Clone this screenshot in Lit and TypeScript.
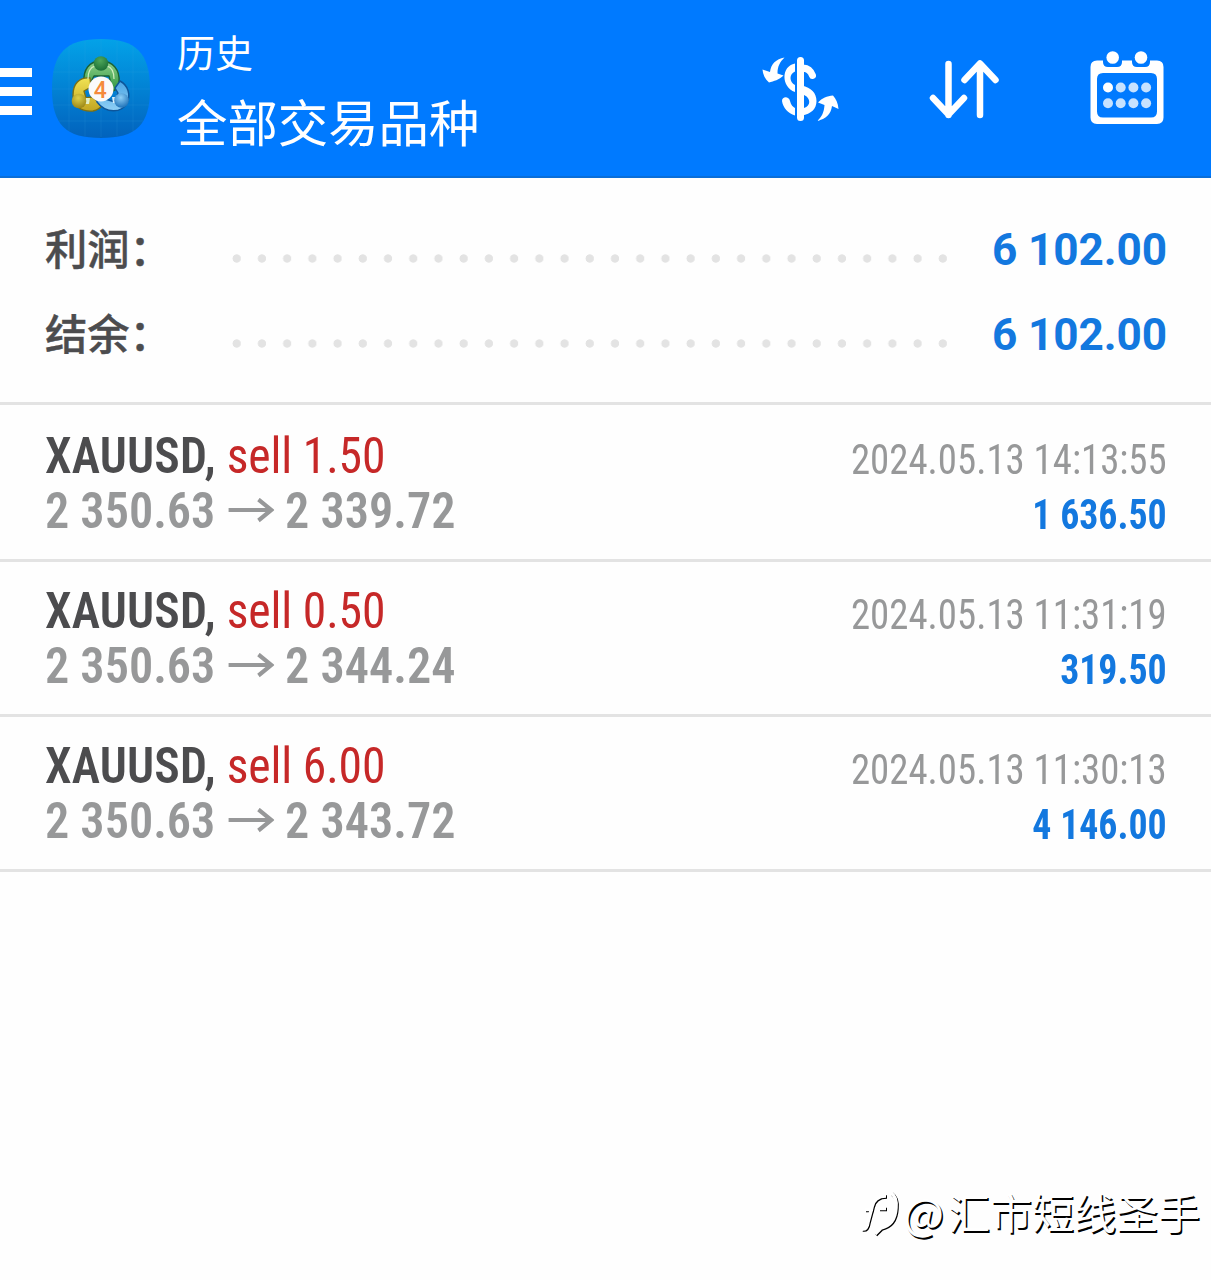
import { LitElement, html, css, svg } from "lit";
import { customElement, property } from "lit/decorators.js";

interface Deal {
  symbol: string;
  side: string;
  open: string;
  close: string;
  time: string;
  profit: string;
}

const deals: Deal[] = [
  {
    symbol: "XAUUSD",
    side: "sell 1.50",
    open: "2 350.63",
    close: "2 339.72",
    time: "2024.05.13 14:13:55",
    profit: "1 636.50",
  },
  {
    symbol: "XAUUSD",
    side: "sell 0.50",
    open: "2 350.63",
    close: "2 344.24",
    time: "2024.05.13 11:31:19",
    profit: "319.50",
  },
  {
    symbol: "XAUUSD",
    side: "sell 6.00",
    open: "2 350.63",
    close: "2 343.72",
    time: "2024.05.13 11:30:13",
    profit: "4 146.00",
  },
];

const calendarDots = [0, 1, 2, 3].map(
  i => svg`
    <circle cx=${18 + i * 12.7} cy="39.5" r="5" opacity=${i === 0 ? 1 : 0.78} />
    <circle cx=${18 + i * 12.7} cy="55.2" r="5" opacity="0.78" />
  `
);

@customElement("app-logo")
class AppLogo extends LitElement {
  static styles = css`
    :host {
      display: block;
      width: 98px;
      height: 100px;
    }

    svg {
      display: block;
    }

    .digit {
      font: 500 23px Roboto, sans-serif;
      fill: #f58a3c;
    }
  `;

  render() {
    return html`
      <svg width="98" height="100" viewBox="0 0 98 100">
        <defs>
          <linearGradient id="bg" x1="0" y1="0" x2="0" y2="1">
            <stop offset="0" stop-color="#03a2e8" />
            <stop offset="0.5" stop-color="#0282d4" />
            <stop offset="1" stop-color="#0262bc" />
          </linearGradient>
          <linearGradient id="green" x1="0" y1="0" x2="0" y2="1">
            <stop offset="0" stop-color="#8fd08a" />
            <stop offset="1" stop-color="#2c9440" />
          </linearGradient>
          <linearGradient id="yellow" x1="0" y1="0" x2="0" y2="1">
            <stop offset="0" stop-color="#f0e254" />
            <stop offset="1" stop-color="#c2a520" />
          </linearGradient>
          <linearGradient id="blue" x1="0" y1="0" x2="0" y2="1">
            <stop offset="0" stop-color="#4ba5e4" />
            <stop offset="1" stop-color="#8fd0f6" />
          </linearGradient>
          <radialGradient id="greenBall" cx="0.45" cy="0.3" r="0.7">
            <stop offset="0" stop-color="#4fa75a" />
            <stop offset="1" stop-color="#1b7036" />
          </radialGradient>
          <radialGradient id="yellowBall" cx="0.45" cy="0.3" r="0.7">
            <stop offset="0" stop-color="#ded04a" />
            <stop offset="1" stop-color="#9b8718" />
          </radialGradient>
          <radialGradient id="blueBall" cx="0.45" cy="0.3" r="0.7">
            <stop offset="0" stop-color="#8fd0f8" />
            <stop offset="1" stop-color="#1f72b8" />
          </radialGradient>
        </defs>
        <path
          fill="url(#bg)"
          d="M49 0C84 0 98 14 98 50S84 99 49 99 0 86 0 50 14 0 49 0Z"
        />
        <path
          stroke="#4fb4e8"
          stroke-opacity="0.14"
          fill="none"
          d="M33 2V97M49 1V98M65 2V97M81 7V92M17 7V92M1 33H97M0 50H98M1 66H97M7 82H91"
        />
        <!-- three figures round the badge -->
        <g stroke-linejoin="round" stroke-width="1.4">
          <path
            fill="url(#green)"
            stroke="#1c6233"
            d="M32 43C31 31 37 22 49 22S68 31 67 43C67 48 64 51 61 52L57 37H42L38 45C35 46 32 45 32 43Z"
          />
          <path
            fill="url(#yellow)"
            stroke="#7c7014"
            d="M38 39C27 38 21 45 21 56C21 67 29 73 41 72C46 71 49 68 50 66L40 58L34 59L32 52L39 48Z"
          />
          <path
            fill="url(#blue)"
            stroke="#0d559a"
            d="M68 42C76 46 79 56 75 64C70 74 54 75 45 63C44 61 46 59 50 59L63 63L66 54L63 49Z"
          />
        </g>
        <path fill="#e2efc8" d="M34 59h4l-1 6h-4z" />
        <path fill="#d6edf9" d="M60 58h4l1 6h-4z" />
        <path fill="none" stroke="#d2efc0" stroke-width="1.2" d="M36 40C36 32 39 28 43 27M62 40C62 32 59 28 55 27" />
        <circle cx="49" cy="24.500" r="7.300" fill="url(#greenBall)" />
        <circle cx="27" cy="62" r="7.300" fill="url(#yellowBall)" />
        <circle cx="69.500" cy="61.500" r="7.300" fill="url(#blueBall)" />
        <circle cx="49" cy="50" r="12.500" fill="#fafafa" />
        <text class="digit" x="48.200" y="58.500" text-anchor="middle">4</text>
      </svg>
    `;
  }
}

@customElement("total-row")
class TotalRow extends LitElement {
  static styles = css`
    :host {
      display: flex;
      height: 85px;
      align-items: center;
      font-family: Roboto, "Noto Sans CJK SC", sans-serif;
    }

    .label {
      width: 187px;
      padding-top: 2px;
      font-size: 42.3px;
      font-weight: 500;
      line-height: 60px;
      color: #4c4c4e;
      -webkit-text-stroke: 0.4px #4c4c4e;
    }

    .colon {
      margin-left: 0;
    }

    .dots {
      width: 716px;
      height: 9px;
      margin-top: 17px;
      background: radial-gradient(circle at 4.7px 4.5px, #e3e3e3 3.8px, transparent 4.5px);
      background-size: 25.22px 9px;
    }

    .value {
      flex: 1;
      text-align: right;
      font-size: 44.2px;
      font-weight: 700;
      line-height: 60px;
      letter-spacing: -0.1px;
      white-space: nowrap;
      color: #1378df;
    }
  `;

  @property() label = "";
  @property() value = "";

  render() {
    return html`
      <div class="label">${this.label}<span class="colon">：</span></div>
      <div class="dots"></div>
      <div class="value">${this.value}</div>
    `;
  }
}

@customElement("deal-row")
class DealRow extends LitElement {
  static styles = css`
    :host {
      display: flex;
      justify-content: space-between;
      height: 155px;
      padding: 0 44px 0 45px;
      border-bottom: 3px solid #e3e3e3;
      box-sizing: border-box;
      font-family: "Roboto Condensed", Roboto, sans-serif;
      font-stretch: 75%;
      white-space: nowrap;
    }

    .left {
      padding-top: 21px;
    }

    .right {
      padding-top: 25px;
      text-align: right;
    }

    .line {
      height: 55px;
      line-height: 55px;
      font-size: 50.5px;
      transform-origin: left;
      transform: scaleX(0.943);
    }

    .symbol {
      font-weight: 600;
      letter-spacing: 0.2px;
      color: #4c4c4e;
    }

    .side {
      letter-spacing: -0.15px;
      color: #c62828;
    }

    .prices {
      display: flex;
      align-items: center;
      font-weight: 600;
      color: #979899;
      transform: scaleX(0.955);
    }

    .arrow {
      margin: 0 11px 0 14px;
    }

    .right .line {
      font-size: 42px;
      transform-origin: right;
    }

    .right .time {
      color: #979899;
      transform: scaleX(0.924);
    }

    .right .profit {
      font-weight: 700;
      color: #1378df;
      transform: scaleX(0.9);
    }
  `;

  @property({ attribute: false }) deal!: Deal;

  render() {
    const { symbol, side, open, close, time, profit } = this.deal;

    return html`
      <div class="left">
        <div class="line">
          <span class="symbol">${symbol},</span> <span class="side">${side}</span>
        </div>
        <div class="line prices">
          <span>${open}</span>
          <svg class="arrow" width="48" height="26" viewBox="0 0 48 26">
            <path
              d="M0 12H45M31.500 1.500L45 12L31.500 22.500"
              fill="none"
              stroke="currentColor"
              stroke-width="4.200"
            />
          </svg>
          <span>${close}</span>
        </div>
      </div>
      <div class="right">
        <div class="line time">${time}</div>
        <div class="line profit">${profit}</div>
      </div>
    `;
  }
}

@customElement("app-root")
class AppRoot extends LitElement {
  static styles = css`
    :host {
      display: block;
      position: relative;
      height: 1280px;
      background: #fefefe;
      overflow: hidden;
      font-family: Roboto, "Noto Sans CJK SC", sans-serif;
    }

    header {
      display: flex;
      height: 178px;
      box-sizing: border-box;
      border-bottom: 2px solid #0a6ed8;
      background: #007aff;
      color: #fff;
    }

    .menu {
      display: flex;
      flex-direction: column;
      gap: 10px;
      width: 32px;
      padding-top: 68px;
    }

    .menu span {
      height: 9px;
      background: #fff;
    }

    app-logo {
      margin: 39px 0 0 20px;
    }

    .titles {
      flex: 1;
      padding: 23px 0 0 27px;
      font-family: "Noto Sans CJK SC", sans-serif;
    }

    .section {
      font-size: 38px;
      line-height: 56px;
    }

    .title {
      padding-top: 2px;
      font-size: 50.4px;
      line-height: 80px;
    }

    .actions {
      display: flex;
      padding-top: 48px;
      padding-right: 45px;
    }

    .actions svg {
      display: block;
    }

    .currency {
      margin-right: 88px;
    }

    .sort {
      margin-right: 90px;
    }

    .totals {
      height: 227px;
      padding: 29px 44px 0 45px;
      box-sizing: border-box;
      border-bottom: 3px solid #e3e3e3;
      margin-bottom: 2px;
    }

    .watermark {
      position: absolute;
      right: 11px;
      bottom: 38px;
      display: flex;
      align-items: center;
      font-family: "Noto Sans CJK SC", sans-serif;
      font-size: 42px;
      line-height: 62px;
      color: #fff;
      text-shadow: 1.5px 1.5px 0.6px #000;
    }

    .watermark svg {
      filter: drop-shadow(1.5px 1.5px 0.3px #000);
    }

    .at {
      font-size: 43px;
      margin-right: 4px;
    }
  `;

  render() {
    return html`
      <header>
        <div class="menu"><span></span><span></span><span></span></div>
        <app-logo></app-logo>
        <div class="titles">
          <div class="section">历史</div>
          <div class="title">全部交易品种</div>
        </div>
        <div class="actions">
          <svg class="currency" width="78" height="78" viewBox="0 0 78 78">
            <path
              d="M38.500 12.500V69.500M41 20Q48 20.500 50.500 27.500"
              fill="none"
              stroke="#fff"
              stroke-width="7"
              stroke-linecap="round"
            />
            <g fill="#fff">
              <path d="M33 15.500C19 18 19 39 33 44V37C27 34 27 26 33 23.500Z" />
              <path d="M20 53C20 48 27 48 28 53C29 57 31 59 33 60V67.500C26 65 21 60 20 53Z" />
              <path
                fill-rule="evenodd"
                d="M40 37.500C49 39.500 54.500 45 54.500 53S49 66 40 67.500ZM42 47V60C49 58 49 50 42 47Z"
              />
              <path d="M22.500 9.500C14 11 9 16 8 24L0.500 21.500C1 27 3 31 7 34.500C12 33 17 32 21.500 27.500L15.500 25.500C15.500 18 18 14 22.500 9.500Z" />
              <path d="M55 73C60 69 62 64 62.500 57L56 54.500C60 50 65 48 71 47.500C74 51 76 55 76.500 61L70 58C69 66 64 71 55 73Z" />
            </g>
          </svg>
          <svg class="sort" width="72" height="78" viewBox="0 0 72 78">
            <path
              d="M20.500 16V67M5 50L20.500 66.500L36 50M52 67V16M36.500 32L52 15.500L67.500 32"
              fill="none"
              stroke="#fff"
              stroke-width="6.500"
              stroke-linecap="round"
              stroke-linejoin="round"
            />
          </svg>
          <svg width="76" height="78" viewBox="0 0 76 78">
            <g fill="#fff">
              <path
                fill-rule="evenodd"
                d="M7 12.500H13V14Q13 19 18 19H27Q32 19 32 14V12.500H42V14Q42 19 47 19H55Q60 19 60 14V12.500H67Q73.500 12.500 73.500 19V69.500Q73.500 76 67 76H7Q0.500 76 0.500 69.500V19Q0.500 12.500 7 12.500ZM13 25Q7 25 7 31V63.500Q7 69.500 13 69.500H61Q67 69.500 67 63.500V31Q67 25 61 25Z"
              />
              <circle cx="22.700" cy="9.500" r="6.300" />
              <circle cx="51" cy="9.500" r="6.300" />
              ${calendarDots}
            </g>
          </svg>
        </div>
      </header>
      <section class="totals">
        <total-row label="利润" value="6 102.00"></total-row>
        <total-row label="结余" value="6 102.00"></total-row>
      </section>
      <section>${deals.map(deal => html`<deal-row .deal=${deal}></deal-row>`)}</section>
      <div class="watermark">
        <svg width="42" height="50" viewBox="0 0 42 50">
          <path
            d="M1 43Q6 44 7 36L11 21Q13 10 25 10M4 23.500H12M30 7Q36 11 35 22Q34 39 20 42L14 48M18 22.500H25"
            fill="none"
            stroke="#fff"
            stroke-width="3.500"
          />
        </svg>
        <span class="at">@</span>
        <span>汇市短线圣手</span>
      </div>
    `;
  }
}

export { AppRoot, AppLogo, DealRow, TotalRow };
